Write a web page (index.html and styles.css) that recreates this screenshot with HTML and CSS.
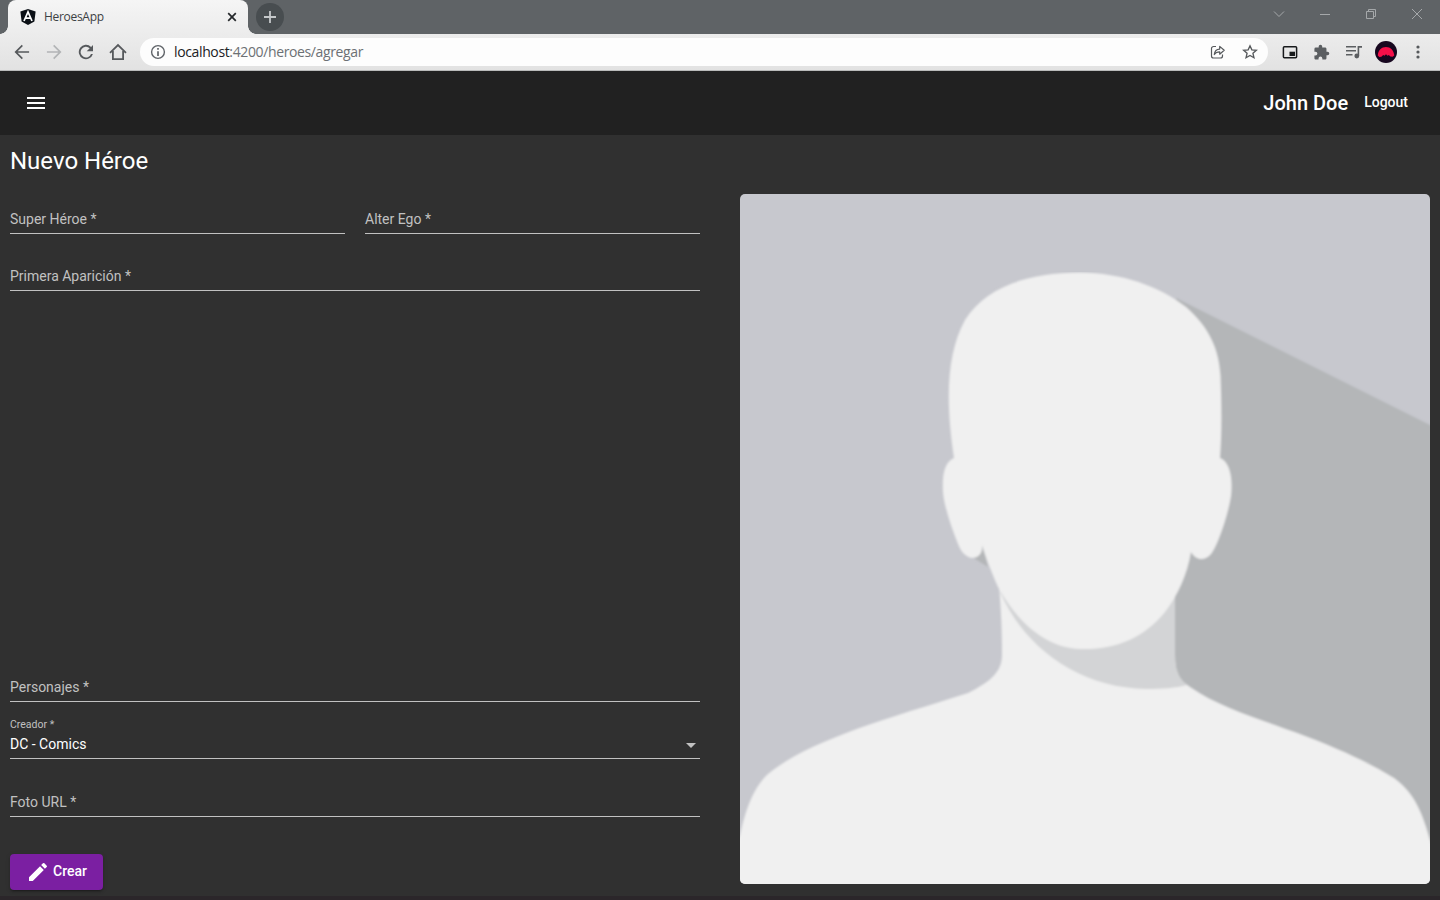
FILE: index.html
```html
<!DOCTYPE html>
<html lang="es">
<head>
<meta charset="utf-8">
<title>HeroesApp</title>
<link rel="stylesheet" href="styles.css">
</head>
<body>
<div class="window">
  <header class="tabstrip">
    <div class="tab">
      <svg class="favicon" width="16" height="16" viewBox="0 0 16 16"><path d="M8 0l7.6 2.6-1.2 10L8 16l-6.400-3.400-1.200-10z" fill="#0b1016"/><path d="M4 12L8 2.800l4 9.200M5.600 9.200h4.800" fill="none" stroke="#fff" stroke-width="1.700"/></svg>
      <span class="tab-title">HeroesApp</span>
      <svg width="10" height="10" viewBox="0 0 10 10"><path d="M1.200 1.200l7.600 7.600M8.800 1.200L1.200 8.800" stroke="#25282b" stroke-width="1.700"/></svg>
    </div>
    <div class="new-tab"><svg width="12" height="12" viewBox="0 0 12 12"><path d="M6 0v12M0 6h12" stroke="#c5c8ca" stroke-width="1.800"/></svg></div>
    <div class="window-controls">
      <svg width="12" height="12" viewBox="0 0 12 12"><path d="M1 3.500l5 5 5-5"/></svg>
      <svg width="12" height="12" viewBox="0 0 12 12"><path d="M1 6.500h10"/></svg>
      <svg width="12" height="12" viewBox="0 0 12 12"><path d="M1.500 3.500h7v7h-7zM3.500 3.500v-2h7v7h-2"/></svg>
      <svg width="12" height="12" viewBox="0 0 12 12"><path d="M1 1l10 10M11 1L1 11"/></svg>
    </div>
  </header>
  <nav class="browser-bar">
    <div class="nav-icons">
      <svg width="20" height="20" viewBox="0 0 24 24" fill="#56595c"><path d="M20.500 11H6.800l6.300-6.300L11.700 3.300 3 12l8.700 8.700 1.400-1.400L6.800 13h13.700z"/></svg>
      <svg width="20" height="20" viewBox="0 0 24 24" fill="#b2b4b6"><path d="M3.500 11h13.700l-6.300-6.300 1.400-1.400L21 12l-8.700 8.700-1.400-1.400 6.300-6.300H3.500z"/></svg>
      <svg width="20" height="20" viewBox="0 0 20 20" fill="#56595c"><path d="M15.100 4.900A7.200 7.200 0 1 0 16.900 12h-1.900a5.350 5.350 0 1 1-1.300-5.700L10.700 9.300H17V3z"/></svg>
      <svg width="20" height="20" viewBox="0 0 20 20"><path d="M2 10.800L10 3l8 7.800M4.900 9v8.100h10.200V9" fill="none" stroke="#56595c" stroke-width="1.800"/></svg>
    </div>
    <div class="omnibox">
      <svg width="16" height="16" viewBox="0 0 16 16"><circle cx="8" cy="8" r="6.400" fill="none" stroke="#5f6368" stroke-width="1.400"/><path d="M8 4v1.800M8 7.200V12" stroke="#5f6368" stroke-width="1.700"/></svg>
      <span class="url"><b>localhost</b>:4200/heroes/agregar</span>
      <span class="omni-actions">
        <svg width="16" height="16" viewBox="0 0 16 16"><path d="M6 2.500H3.500a2 2 0 0 0-2 2v7.500a2 2 0 0 0 2 2h7a2 2 0 0 0 2-2v-1.500M4.300 10.500c.4-3.800 2.300-5.300 5.400-5.400V2.400L14.200 6.300 9.700 10.200V7.800c-2.500 0-4.200.8-5.400 2.700z" fill="none" stroke="#56595c" stroke-width="1.200" stroke-linejoin="round"/></svg>
        <svg width="16" height="16" viewBox="0 0 16 16"><path d="M8 1.800l1.850 4.100 4.500.45-3.400 3 1 4.400L8 11.450l-3.950 2.300 1-4.400-3.400-3 4.500-.45z" fill="none" stroke="#56595c" stroke-width="1.350"/></svg>
      </span>
    </div>
    <div class="extensions">
      <svg width="16" height="16" viewBox="0 0 16 16"><rect x="1.400" y="2.800" width="13.200" height="10.900" rx="1" fill="none" stroke="#17191b" stroke-width="1.500"/><path d="M7.500 7.700H13v4.300H7.500z" fill="#17191b"/></svg>
      <svg width="17" height="17" viewBox="0 0 24 24" fill="#5b5e61"><path d="M20.500 11H19V7c0-1.100-.9-2-2-2h-4V3.500a2.500 2.500 0 0 0-5 0V5H4a2 2 0 0 0-2 2v3.800h1.500a2.700 2.700 0 0 1 0 5.400H2V20c0 1.100.9 2 2 2h3.800v-1.500a2.700 2.700 0 0 1 5.400 0V22H17c1.100 0 2-.9 2-2v-4h1.500a2.500 2.500 0 0 0 0-5z"/></svg>
      <svg width="18" height="16" viewBox="0 0 18 16"><path d="M1 2.800h10M1 6.800h10M1 10.800h6.500M13.400 12V2.900h3.600" fill="none" stroke="#5b5e61" stroke-width="1.600"/><circle cx="11.800" cy="12" r="2.400" fill="#5b5e61"/></svg>
      <svg class="profile" width="22" height="22" viewBox="0 0 22 22"><circle cx="11" cy="11" r="11" fill="#17071f"/><path d="M2.800 14.500C3 9.300 6.600 6 11 6s7.900 3.300 8.300 8.500l-1.700 1.300-2.200-.4-1.600-1.400-1.300.7L11 13.300l-1.500 1.400-1.300-.7-1.800 1.700-2.100.2z" fill="#f50f49"/></svg>
      <svg class="kebab" width="4" height="16" viewBox="0 0 4 16" fill="#56595c"><circle cx="2" cy="3" r="1.600"/><circle cx="2" cy="8" r="1.600"/><circle cx="2" cy="13" r="1.600"/></svg>
    </div>
  </nav>
  <div class="toolbar">
    <svg width="24" height="24" viewBox="0 0 24 24" fill="#fff"><path d="M3 18h18v-2H3v2zm0-5h18v-2H3v2zm0-7v2h18V6H3z"/></svg>
    <span class="user">John Doe</span>
    <span class="logout">Logout</span>
  </div>
  <main class="content">
    <h1>Nuevo Héroe</h1>
    <div class="columns">
      <form class="form">
        <div class="row">
          <div class="field hero"><label>Super Héroe *</label></div>
          <div class="field ego"><label>Alter Ego *</label></div>
        </div>
        <div class="field first"><label>Primera Aparición *</label></div>
        <div class="field characters"><label>Personajes *</label></div>
        <div class="field select">
          <label class="floating">Creador *</label>
          <div class="value"><span>DC - Comics</span><i class="arrow"></i></div>
        </div>
        <div class="field photo"><label>Foto URL *</label></div>
        <button class="create" type="button"><svg width="24" height="24" viewBox="0 0 24 24" fill="#fff"><path d="M3 17.250V21h3.750L17.810 9.940l-3.750-3.750L3 17.250zM20.710 7.040a1 1 0 0 0 0-1.410l-2.340-2.340a1 1 0 0 0-1.410 0l-1.830 1.830 3.750 3.750 1.830-1.830z"/></svg><span>Crear</span></button>
      </form>
      <svg class="portrait" width="690" height="690" viewBox="740 194 690 690">
        <defs><filter id="soften" x="0" y="0" width="100%" height="100%"><feGaussianBlur stdDeviation=".8"/></filter></defs>
        <path fill="#c7c8ce" d="M740 194h690v690H740z"/>
        <g filter="url(#soften)">
        <path fill="#b4b6b8" d="M1176 298L1440 430V894H1160V560z"/>
        <path fill="#b4b6b8" d="M972 557l16 10-6-24z"/>
        <path fill="#f0f0f0" d="M730 894V860L740 835C747 803 756 785 768 774C810 740 880 721 968 693C990 682 1002 672 1002 655C1002 630 1001 610 999 585H1175V655C1175 672 1179 680 1190 687C1220 708 1260 719 1305 736C1350 753 1376 767 1394 778C1415 793 1423 815 1430 840L1440 870V894z"/>
        <path fill="#d3d4d6" d="M1000 592C1025 649 1080 688 1146 689C1162 689 1176 688 1187 685C1178 678 1175 671 1175 655V585z"/>
        <path fill="#f0f0f0" d="M954 458C945 398 947 353 965 320C985 288 1025 273 1080 272.500C1122 273 1159 286 1186 307C1210 328 1219 350 1220.500 376C1221.500 405 1222 430 1220 458C1230 462 1233 478 1231 496C1228 515 1218 545 1211 554C1205 561 1196 561 1191 552C1187 575 1178 595 1165 612C1144 638 1115 650 1081 649C1043 648 1015 618 998 587C991 571 986 558 982 545C983 553 979 558 972 558C966 557 961 552 958 544C951 526 944 506 943 492C942 473 945 462 954 458z"/>
        </g>
      </svg>
    </div>
  </main>
  <div class="bottom-edge"></div>
</div>
</body>
</html>
```
FILE: styles.css
```css
* { box-sizing: border-box; }
body { margin: 0; font-family: Roboto, sans-serif; background: #303030; color: #fff; }
svg { display: block; flex: none; }
.window { width: 1440px; height: 900px; display: flex; flex-direction: column; overflow: hidden; }

.tabstrip { height: 34px; flex: none; display: flex; align-items: center; background: #5f6366; padding-left: 8px; }
.tab { position: relative; width: 240px; height: 34px; padding: 0 11px 0 12px; display: flex; align-items: center; background: linear-gradient(#f5f5f5, #ececec); border-radius: 8px 8px 0 0; color: #3c4043; }
.tab::before, .tab::after { content: ""; position: absolute; bottom: 0; width: 8px; height: 8px; }
.tab::before { left: -8px; background: radial-gradient(circle at 0 0, transparent 7.5px, #ececec 8px); }
.tab::after { right: -8px; background: radial-gradient(circle at 100% 0, transparent 7.5px, #ececec 8px); }
.tab-title { flex: 1; margin-left: 8px; padding-bottom: 1px; font: 12px "Open Sans", sans-serif; letter-spacing: -.3px; }
.new-tab { width: 28px; height: 28px; margin-left: 8px; border-radius: 50%; background: #484d50; display: flex; align-items: center; justify-content: center; }
.window-controls { margin-left: auto; display: flex; gap: 34px; padding-right: 17px; padding-bottom: 6px; }
.window-controls path { fill: none; stroke: #a5a8aa; stroke-width: 1; }

.browser-bar { height: 37px; flex: none; display: flex; align-items: center; padding-left: 12px; background: linear-gradient(#ececec, #e2e2e2); border-bottom: 1px solid #b9bbba; }
.nav-icons { display: flex; gap: 12px; }
.omnibox { width: 1128px; height: 28px; margin-left: 12px; padding: 0 10px; border-radius: 14px; background: #fdfdfd; display: flex; align-items: center; }
.url { margin-left: 8px; padding-bottom: 1px; font: 14px "Open Sans", sans-serif; letter-spacing: -.37px; color: #6c7074; }
.url b { font-weight: 400; color: #202124; }
.omni-actions { margin-left: auto; display: flex; gap: 16px; }
.extensions { display: flex; align-items: center; margin-left: 14px; }
.extensions svg + svg { margin-left: 15px; }
.extensions .profile + .kebab { margin-left: 19px; }
.extensions svg.profile { margin-left: 12px; }

.toolbar { height: 64px; flex: none; background: #212121; display: flex; align-items: center; padding: 0 32px 0 24px; }
.user { margin-left: auto; font-size: 20px; font-weight: 500; }
.logout { margin-left: 16px; font-size: 14px; font-weight: 500; padding-bottom: 2px; }

.content { height: 761px; flex: none; padding: 10px 10px 0; }
h1 { margin: 0; height: 32px; line-height: 32px; font-size: 24px; font-weight: 400; }
.columns { display: flex; gap: 40px; margin-top: 17px; }
.form { width: 690px; height: 696px; display: flex; flex-direction: column; }
.row { display: flex; gap: 20px; }
.field { height: 40px; border-bottom: 1px solid #c1c1c1; display: flex; flex-direction: column; justify-content: flex-end; padding-bottom: 6px; font-size: 14px; line-height: 16px; color: #c1c1c1; flex: none; }
.hero { width: 335px; }
.ego { flex: 1; }
.first { margin-top: 17px; }
.characters { margin-top: auto; }
.select { height: 44px; margin-top: 13px; }
.floating { font-size: 10.5px; line-height: 14px; margin-bottom: 4px; }
.value { display: flex; justify-content: space-between; align-items: center; padding-right: 4px; color: #fff; }
.arrow { border: 5px solid transparent; border-top-color: #c1c1c1; border-bottom: 0; margin-top: 2px; }
.photo { margin-top: 18px; }
.create { width: 93px; height: 36px; flex: none; margin-top: 37px; padding: 0 16px; display: flex; align-items: center; gap: 3px; border: 0; border-radius: 4px; background: #7b1fa2; color: #fff; font: 500 14px Roboto, sans-serif; box-shadow: 0 3px 1px -2px rgba(0,0,0,.2), 0 2px 2px rgba(0,0,0,.14), 0 1px 5px rgba(0,0,0,.12); }
.create span { padding-bottom: 2px; }
.portrait { border-radius: 5px; }
.bottom-edge { flex: 1; background: #2b262a; }
```
